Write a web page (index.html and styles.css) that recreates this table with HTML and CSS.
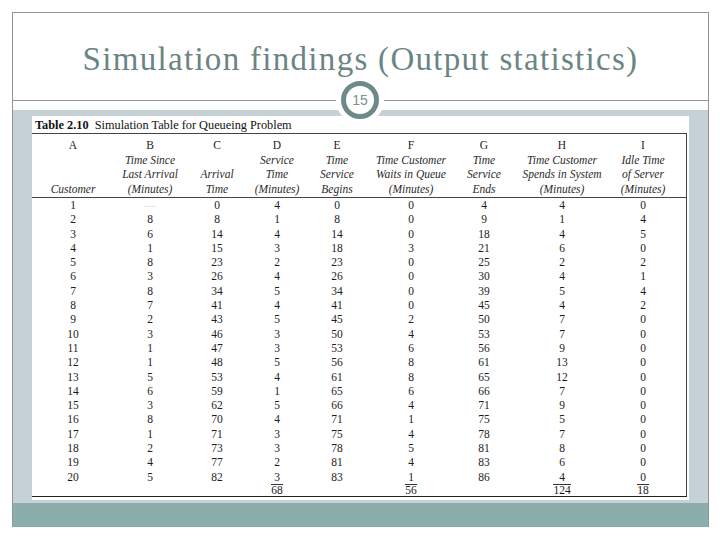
FILE: index.html
```html
<!DOCTYPE html>
<html>
<head>
<meta charset="utf-8">
<link rel="stylesheet" href="styles.css">
</head>
<body>
<div class="frame">
  <div class="head">
    <h1 class="title">Simulation findings (Output statistics)</h1>
  </div>
  <div class="badge"><span>15</span></div>
  <div class="gap"></div>
  <div class="panel">
    <div class="sheet">
      <div class="caption"><b>Table 2.10</b>&nbsp; Simulation Table for Queueing Problem</div>
      <div class="tbl">
        <div class="hrow">
          <div class="hc"><span class="let">A</span><span></span><span></span><i>Customer</i></div>
          <div class="hc"><span class="let">B</span><i>Time Since</i><i>Last Arrival</i><i>(Minutes)</i></div>
          <div class="hc"><span class="let">C</span><span></span><i>Arrival</i><i>Time</i></div>
          <div class="hc"><span class="let">D</span><i>Service</i><i>Time</i><i>(Minutes)</i></div>
          <div class="hc"><span class="let">E</span><i>Time</i><i>Service</i><i>Begins</i></div>
          <div class="hc"><span class="let">F</span><i>Time Customer</i><i>Waits in Queue</i><i>(Minutes)</i></div>
          <div class="hc"><span class="let">G</span><i>Time</i><i>Service</i><i>Ends</i></div>
          <div class="hc"><span class="let">H</span><i>Time Customer</i><i>Spends in System</i><i>(Minutes)</i></div>
          <div class="hc"><span class="let">I</span><i>Idle Time</i><i>of Server</i><i>(Minutes)</i></div>
        </div>
        <div class="body" id="body"></div>
        <div class="row tot">
          <span></span><span></span><span></span><span><em>68</em></span><span></span><span><em>56</em></span><span></span><span><em>124</em></span><span><em>18</em></span>
        </div>
      </div>
    </div>
  </div>
  <div class="foot"></div>
</div>
<script>
var d = [
[1,"—",0,4,0,0,4,4,0],
[2,8,8,1,8,0,9,1,4],
[3,6,14,4,14,0,18,4,5],
[4,1,15,3,18,3,21,6,0],
[5,8,23,2,23,0,25,2,2],
[6,3,26,4,26,0,30,4,1],
[7,8,34,5,34,0,39,5,4],
[8,7,41,4,41,0,45,4,2],
[9,2,43,5,45,2,50,7,0],
[10,3,46,3,50,4,53,7,0],
[11,1,47,3,53,6,56,9,0],
[12,1,48,5,56,8,61,13,0],
[13,5,53,4,61,8,65,12,0],
[14,6,59,1,65,6,66,7,0],
[15,3,62,5,66,4,71,9,0],
[16,8,70,4,71,1,75,5,0],
[17,1,71,3,75,4,78,7,0],
[18,2,73,3,78,5,81,8,0],
[19,4,77,2,81,4,83,6,0],
[20,5,82,3,83,1,86,4,0]
];
var b = document.getElementById("body");
d.forEach(function(r){
  var row = document.createElement("div");
  row.className = "row";
  r.forEach(function(v){
    var s = document.createElement("span");
    s.textContent = v;
    if (v === "—") s.className = "dash";
    row.appendChild(s);
  });
  b.appendChild(row);
});
</script>
</body>
</html>
```
FILE: styles.css
```css
html, body {
  margin: 0;
  padding: 0;
  background: #ffffff;
}
.frame {
  position: relative;
  margin: 12px 0 0 12px;
  width: 695px;
  height: 514px;
  border: 1px solid #8d9797;
  border-bottom: none;
  display: flex;
  flex-direction: column;
}
.head {
  height: 87px;
  border-bottom: 1px solid #8d9797;
  display: flex;
  justify-content: center;
  box-sizing: content-box;
}
.title {
  margin: 0;
  padding-top: 26px;
  font-family: "Liberation Serif", "Times New Roman", serif;
  font-weight: normal;
  font-size: 33px;
  line-height: 40px;
  letter-spacing: 1.3px;
  color: #6a8584;
}
.badge {
  position: absolute;
  left: 328px;
  top: 68px;
  width: 28px;
  height: 28px;
  border: 5px solid #6f8a89;
  border-radius: 50%;
  background: #ffffff;
  box-shadow: 0 0 0 5px #ffffff;
  display: flex;
  align-items: center;
  justify-content: center;
  font-family: "Liberation Sans", Arial, sans-serif;
  font-size: 14px;
  color: #7d8f8f;
}
.gap {
  height: 9px;
}
.panel {
  height: 393px;
  background: #c6d1d6;
  padding: 6px 0 0 19px;
  box-sizing: border-box;
}
.sheet {
  width: 657px;
  height: 384px;
  background: #ffffff;
  padding: 2px 3px 0 0;
  box-sizing: border-box;
  font-family: "Liberation Serif", "Times New Roman", serif;
  color: #1c1c1c;
  font-size: 11.5px;
}
.caption {
  height: 15px;
  line-height: 15px;
  padding-left: 3px;
  font-size: 12.3px;
  color: #111;
}
.caption b {
  font-weight: bold;
}
.tbl {
  width: 654px;
  border-top: 1px solid #444;
  border-right: 1px solid #444;
  border-bottom: 1px solid #222;
}
.hrow, .row {
  display: grid;
  grid-template-columns: 82px 72px 62px 58px 62px 86px 60px 96px 66px;
}
.hrow {
  border-bottom: 1px solid #444;
  padding: 4px 0 1px;
}
.hc {
  display: flex;
  flex-direction: column;
  align-items: center;
  line-height: 14.5px;
}
.hc span, .hc i {
  height: 14.5px;
  white-space: nowrap;
}
.hc i {
  font-style: italic;
  color: #2a2a2a;
}
.let {
  color: #222;
}
.row {
  height: 14.3px;
  line-height: 14.3px;
  text-align: center;
}
.row .dash {
  color: #d6d6d6;
}
.row.tot {
  height: 12px;
  line-height: 12px;
}
.row.tot em {
  font-style: normal;
  border-top: 1px solid #333;
  display: inline-block;
  line-height: 11px;
}
.foot {
  height: 24px;
  background: #8badac;
}
```
